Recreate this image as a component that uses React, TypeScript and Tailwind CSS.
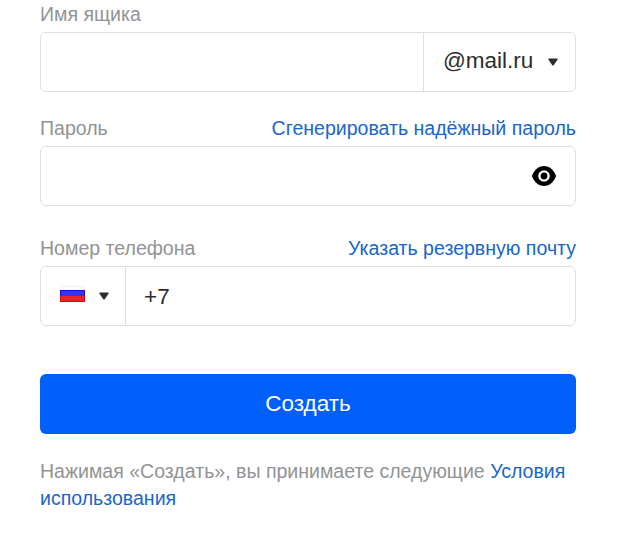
import type { ReactNode } from "react";

function Caret() {
  return (
    <svg width="10" height="8" viewBox="0 0 10 8" className="shrink-0" fill="#2c2d2e">
      <path d="M1 .5h8a.7.7 0 0 1 .6 1.100L5.900 6.900a1.100 1.100 0 0 1-1.800 0L.4 1.600A.7.7 0 0 1 1 .5z" />
    </svg>
  );
}

function Eye() {
  return (
    <svg width="24" height="20" viewBox="0 0 24 20" className="shrink-0">
      <path fill="#000" d="M12 0C6.500 0 2 4 0 10c2 6 6.500 10 12 10s10-4 12-10C22 4 17.500 0 12 0z" />
      <circle cx="12" cy="10" r="4.600" fill="none" stroke="#fff" strokeWidth="2.400" />
    </svg>
  );
}

function RussianFlag() {
  return (
    <svg width="25" height="16" viewBox="0 0 25 16" className="shrink-0">
      <rect width="25" height="16" fill="#f1f1f3" />
      <rect x="1" y="1" width="23" height="4" fill="#fff" />
      <rect y="4" width="25" height="6" fill="#1414d2" />
      <rect x="1" y="5" width="23" height="5" fill="#3434ea" />
      <rect y="10" width="25" height="6" fill="#cf0a14" />
      <rect x="1" y="10" width="23" height="5" fill="#f0202a" />
    </svg>
  );
}

function FieldHeader({ label, action }: { label: string; action?: ReactNode }) {
  return (
    <div className="flex h-6 items-center justify-between">
      <label className="text-[#919396]">{label}</label>
      {action && <a className="text-[#1a66c9]">{action}</a>}
    </div>
  );
}

export default function App() {
  return (
    <div className="h-[538px] w-[624px] overflow-hidden bg-white pl-10 pr-12 pt-[2px] font-['Liberation_Sans',Arial,sans-serif] text-[19.55px] leading-6">
      <FieldHeader label="Имя ящика" />
      <div className="mt-[6px] flex h-[60px] rounded-[6px] border border-[#dcdfe3]">
        <div className="flex-1" />
        <div className="flex w-[152px] items-center justify-between border-l border-[#dcdfe3] pl-[19px] pr-[17px] text-[22.5px] text-[#2c2d2e]">
          <span className="pb-[2px]">@mail.ru</span>
          <Caret />
        </div>
      </div>

      <div className="mt-6">
        <FieldHeader label="Пароль" action="Сгенерировать надёжный пароль" />
      </div>
      <div className="mt-[6px] flex h-[60px] items-center justify-end rounded-[6px] border border-[#dcdfe3] pr-[19px]">
        <Eye />
      </div>

      <div className="mt-[30px]">
        <FieldHeader label="Номер телефона" action="Указать резервную почту" />
      </div>
      <div className="mt-[6px] flex h-[60px] rounded-[6px] border border-[#dcdfe3]">
        <div className="flex w-[85px] items-center justify-between border-r border-[#dcdfe3] pl-[19px] pr-[16px]">
          <div className="pb-1">
            <RussianFlag />
          </div>
          <Caret />
        </div>
        <div className="flex items-center pl-[18px] pt-px text-[22.5px] text-[#2c2d2e]">+7</div>
      </div>

      <button className="mt-12 flex h-[60px] w-full items-center justify-center rounded-[6px] bg-[#005ff9] text-[22.5px] text-white">
        Создать
      </button>
      <p className="mt-6 leading-[27px] text-[#919396]">
        Нажимая «Создать», вы принимаете следующие{" "}
        <a className="text-[#1a66c9]">
          <span>Условия</span> <span>использования</span>
        </a>
      </p>
    </div>
  );
}
